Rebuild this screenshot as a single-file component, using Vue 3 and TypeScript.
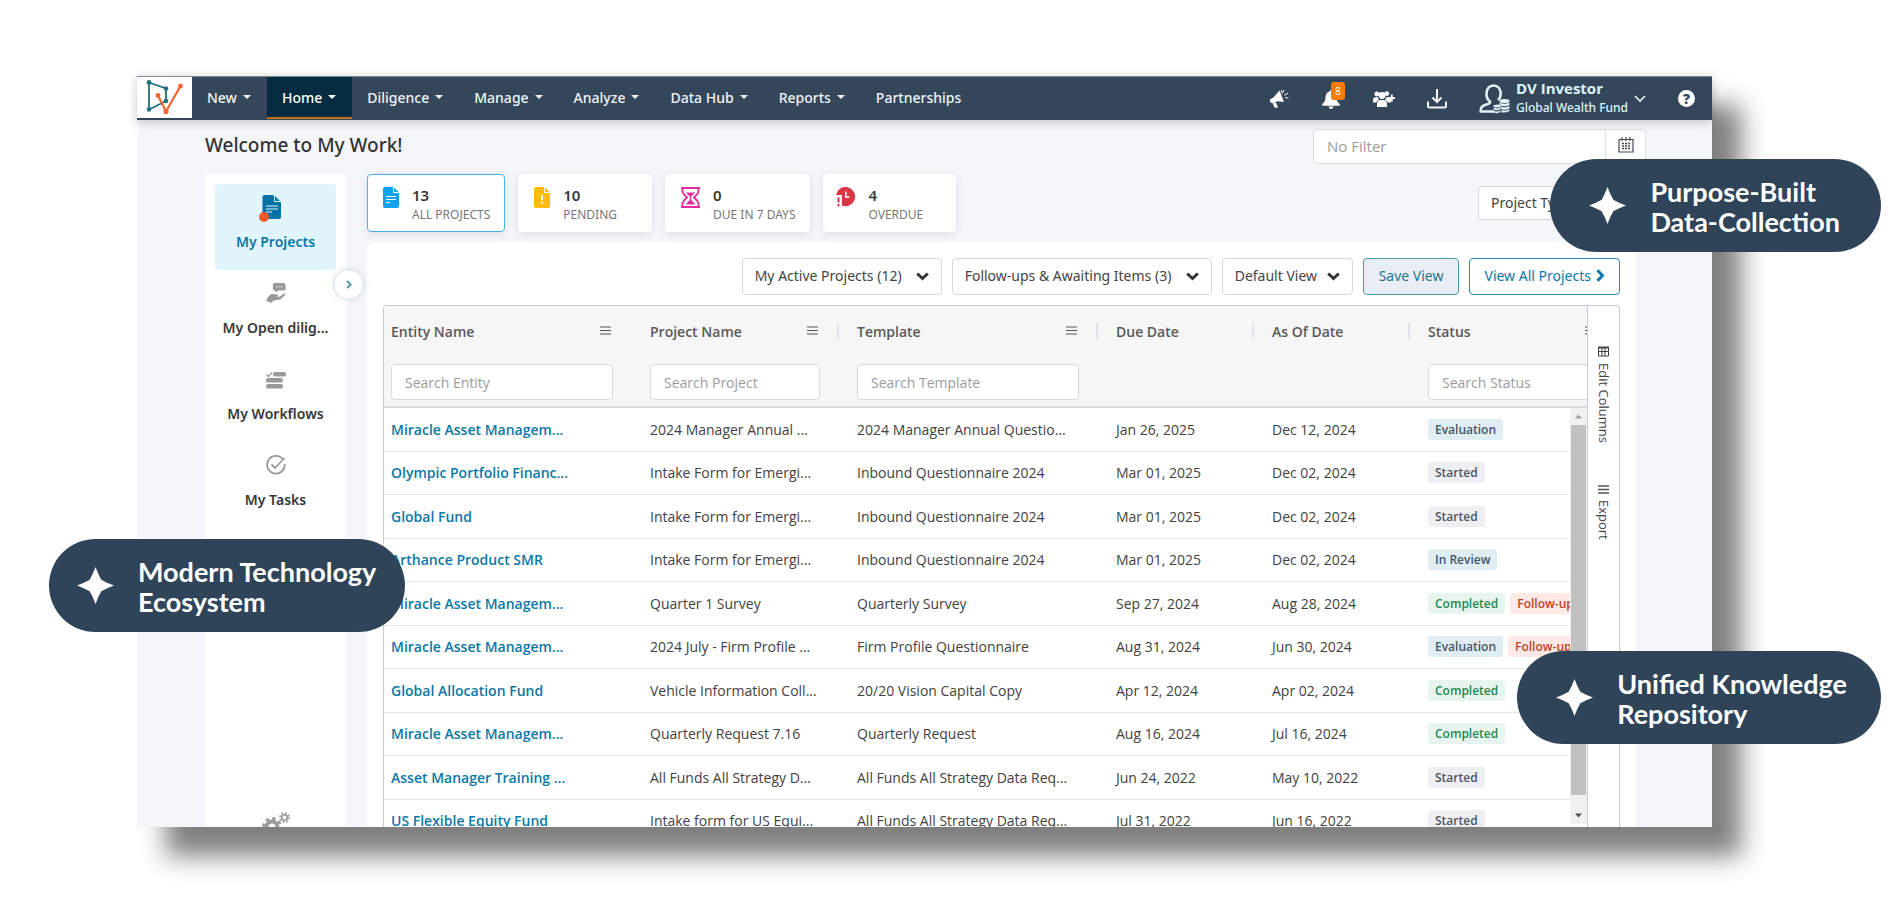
<script setup lang="ts">
interface NavItem { label: string; active?: boolean }
interface Tag { text: string; tone: 'blue' | 'grey' | 'green' | 'red' }
interface Row { entity: string; project: string; template: string; due: string; asOf: string; tags: Tag[] }
interface Column { key: string; title: string; search?: string; menu: boolean; divider: boolean }

const navItems: NavItem[] = [
  { label: 'New' },
  { label: 'Home', active: true },
  { label: 'Diligence' },
  { label: 'Manage' },
  { label: 'Analyze' },
  { label: 'Data Hub' },
  { label: 'Reports' },
]

const stats = [
  { icon: 'doc', value: 13, label: 'ALL PROJECTS', active: true },
  { icon: 'alert', value: 10, label: 'PENDING', active: false },
  { icon: 'hourglass', value: 0, label: 'DUE IN 7 DAYS', active: false },
  { icon: 'clock', value: 4, label: 'OVERDUE', active: false },
]

const sideItems = [
  { icon: 'projects', label: 'My Projects', active: true },
  { icon: 'diligence', label: 'My Open dilig...', active: false },
  { icon: 'workflows', label: 'My Workflows', active: false },
  { icon: 'tasks', label: 'My Tasks', active: false },
]

const filters = ['My Active Projects (12)', 'Follow-ups & Awaiting Items (3)', 'Default View']

const columns: Column[] = [
  { key: 'entity', title: 'Entity Name', search: 'Search Entity', menu: true, divider: false },
  { key: 'project', title: 'Project Name', search: 'Search Project', menu: true, divider: false },
  { key: 'template', title: 'Template', search: 'Search Template', menu: true, divider: true },
  { key: 'due', title: 'Due Date', menu: false, divider: true },
  { key: 'asof', title: 'As Of Date', menu: false, divider: true },
  { key: 'status', title: 'Status', search: 'Search Status', menu: true, divider: true },
]

const evaluation: Tag = { text: 'Evaluation', tone: 'blue' }
const review: Tag = { text: 'In Review', tone: 'blue' }
const started: Tag = { text: 'Started', tone: 'grey' }
const completed: Tag = { text: 'Completed', tone: 'green' }
const followUp: Tag = { text: 'Follow-up', tone: 'red' }

const rows: Row[] = [
  { entity: 'Miracle Asset Managem...', project: '2024 Manager Annual ...', template: '2024 Manager Annual Questio...', due: 'Jan 26, 2025', asOf: 'Dec 12, 2024', tags: [evaluation] },
  { entity: 'Olympic Portfolio Financ...', project: 'Intake Form for Emergi...', template: 'Inbound Questionnaire 2024', due: 'Mar 01, 2025', asOf: 'Dec 02, 2024', tags: [started] },
  { entity: 'Global Fund', project: 'Intake Form for Emergi...', template: 'Inbound Questionnaire 2024', due: 'Mar 01, 2025', asOf: 'Dec 02, 2024', tags: [started] },
  { entity: 'Arthance Product SMR', project: 'Intake Form for Emergi...', template: 'Inbound Questionnaire 2024', due: 'Mar 01, 2025', asOf: 'Dec 02, 2024', tags: [review] },
  { entity: 'Miracle Asset Managem...', project: 'Quarter 1 Survey', template: 'Quarterly Survey', due: 'Sep 27, 2024', asOf: 'Aug 28, 2024', tags: [completed, followUp] },
  { entity: 'Miracle Asset Managem...', project: '2024 July - Firm Profile ...', template: 'Firm Profile Questionnaire', due: 'Aug 31, 2024', asOf: 'Jun 30, 2024', tags: [evaluation, followUp] },
  { entity: 'Global Allocation Fund', project: 'Vehicle Information Coll...', template: '20/20 Vision Capital Copy', due: 'Apr 12, 2024', asOf: 'Apr 02, 2024', tags: [completed] },
  { entity: 'Miracle Asset Managem...', project: 'Quarterly Request 7.16', template: 'Quarterly Request', due: 'Aug 16, 2024', asOf: 'Jul 16, 2024', tags: [completed] },
  { entity: 'Asset Manager Training ...', project: 'All Funds All Strategy D...', template: 'All Funds All Strategy Data Req...', due: 'Jun 24, 2022', asOf: 'May 10, 2022', tags: [started] },
  { entity: 'US Flexible Equity Fund', project: 'Intake form for US Equi...', template: 'All Funds All Strategy Data Req...', due: 'Jul 31, 2022', asOf: 'Jun 16, 2022', tags: [started] },
]

const callouts = [
  { place: 'ecosystem', lines: ['Modern Technology', 'Ecosystem'] },
  { place: 'collection', lines: ['Purpose-Built', 'Data-Collection'] },
  { place: 'repository', lines: ['Unified Knowledge', 'Repository'] },
]
</script>

<template>
  <div class="stage">
    <div class="window">
      <header class="navbar">
        <a href="#" class="logo" aria-label="Home page">
          <svg width="55" height="41" viewBox="0 0 55 41" fill="none" stroke-width="2.2">
            <g stroke="#23707f" fill="#23707f">
              <path d="M12 5.500 29 11.500V24L12 32.500Z" fill="none" stroke-width="1.800" />
              <circle cx="12" cy="5.500" r="1.300" /><circle cx="29" cy="11.500" r="1.200" />
              <circle cx="29" cy="24" r="1.200" /><circle cx="12" cy="32.500" r="1.200" />
            </g>
            <g stroke="#f26430" fill="#f26430">
              <path d="M21 18.500 29 34.500 43.500 9" fill="none" />
              <circle cx="21" cy="18.500" r="1.300" /><circle cx="29" cy="34.500" r="1.500" /><circle cx="43.500" cy="9" r="1.300" />
            </g>
          </svg>
        </a>
        <nav class="menu">
          <button v-for="item in navItems" :key="item.label" type="button" class="menu-item" :class="{ current: item.active }">
            {{ item.label }}
            <svg width="8" height="4" viewBox="0 0 8 4"><path d="M0 0h8L4 4Z" fill="currentColor" /></svg>
          </button>
          <a href="#" class="menu-item">Partnerships</a>
        </nav>
        <div class="tools">
          <button type="button" class="tool" aria-label="Announcements">
            <svg width="20" height="20" viewBox="0 0 20 20" fill="#fff">
              <path d="M10.500 1.500 15 13 8.500 12.300 3.500 14.300Q0.500 14 .6 10.700L4.600 8.300Z" />
              <path d="M3.600 14.500 6.800 13.300 9 18.300 6 19Z" />
              <path d="M13.500 4.500 15 1M15.300 6.300 19 4.200M16 8.800 19.500 9M12.400 3.500 12.500 1" stroke="#fff" stroke-width="1" />
            </svg>
          </button>
          <button type="button" class="tool bell" aria-label="Notifications, 8 unread">
            <svg width="20" height="20" viewBox="0 0 20 20" fill="#fff">
              <path d="M10 1a1.400 1.400 0 0 1 1.400 1.500C14 3.200 15.500 5.400 15.500 8c0 4 1.300 5.400 3 6.800.9.800.5 2-.7 2H2.200c-1.200 0-1.600-1.200-.7-2C3.200 13.400 4.500 12 4.500 8c0-2.600 1.500-4.800 4.100-5.500A1.400 1.400 0 0 1 10 1ZM7.600 17.600h4.800a2.400 2.400 0 0 1-4.800 0Z" />
            </svg>
            <span class="badge">8</span>
          </button>
          <button type="button" class="tool" aria-label="Add people">
            <svg width="22" height="18" viewBox="0 0 22 18" fill="#fff">
              <circle cx="3.800" cy="4" r="2.400" /><circle cx="13.800" cy="3.600" r="2.400" /><circle cx="9" cy="5.500" r="3.400" />
              <path d="M0 12.500V10Q0 7.300 2.500 7.300H5Q5 9 6 9.800 3.800 10.500 3.300 12.500ZM4 17v-3Q4 10 7.500 10h3q3.500 0 3.500 4v3ZM14.800 12.500Q14.200 10.500 12 9.800 13 9 13 7.300h2.500q2.500 0 2.500 2.700v2.500Z" />
              <path d="M18.800 4.500v7M15.300 8h6.700" stroke="#fff" stroke-width="1.800" />
            </svg>
          </button>
          <button type="button" class="tool" aria-label="Downloads">
            <svg width="20" height="20" viewBox="0 0 20 20" fill="none" stroke="#f2f5f8" stroke-width="2">
              <path d="M10 0v13M5.500 8.500 10 13l4.500-4.500M1 12.500V17q0 1.500 1.500 1.500h15Q19 18.500 19 17V12.500" />
            </svg>
          </button>
          <button type="button" class="account">
            <svg width="31" height="30" viewBox="0 0 31 30" fill="none" stroke="#def3f6" stroke-width="2.600">
              <path d="M15 27.500H1.800Q1 22 7.500 20.500 11.500 19.500 11 17.500 7.500 15 7.500 10C7.500 4.500 10.500 1.500 14.500 1.500s7.200 3 7.200 8.500q0 3.500-2.700 6" />
              <g stroke="none" fill="#def3f6">
                <ellipse cx="25.500" cy="17" rx="5" ry="2" /><path d="M20.500 18.500q5 2.500 10 0V21q-5 2.500-10 0ZM20.500 22q5 2.500 10 0v2.500q-5 2.500-8 .5ZM22.500 26q4 1.500 8-.5V27q-3 2-8 1.500Z" />
                <ellipse cx="18" cy="22" rx="3.500" ry="1.500" /><path d="M14.500 23.500q3.500 1.800 7 0V25.500q-3.500 1.500-7 0ZM14.500 26.500q3.500 1.800 7 0V28q-3 2-7 .5Z" />
              </g>
            </svg>
            <span class="who"><b>DV Investor</b><span>Global Wealth Fund</span></span>
            <svg class="down" width="12" height="8" viewBox="0 0 12 8" fill="none" stroke="#e6f3f6" stroke-width="1.600"><path d="M1 1l5 5 5-5" /></svg>
          </button>
          <button type="button" class="tool help" aria-label="Help">?</button>
        </div>
      </header>

      <main class="page">
        <div class="heading">
          <h1>Welcome to My Work!</h1>
          <div class="date-filter">
            <input type="text" placeholder="No Filter" aria-label="Date filter" />
            <button type="button" aria-label="Open calendar">
              <svg width="16" height="16" viewBox="0 0 16 16" fill="none" stroke="#4c4656" stroke-width="1.200">
                <path d="M1 2.500h14v12.500H1ZM4 0v4M8 0v4M12 0v4" />
                <path d="M4 6.500h2M7 6.500h2M10 6.500h2M4 9h2M7 9h2M10 9h2M4 11.500h2M7 11.500h2M10 11.500h2" stroke-width="1.600" />
              </svg>
            </button>
          </div>
        </div>

        <div class="body">
          <aside class="sidebar">
            <a v-for="item in sideItems" :key="item.icon" href="#" class="side-item" :class="{ current: item.active }">
              <svg v-if="item.icon === 'projects'" width="33" height="28" viewBox="0 0 33 28">
                <path d="M5.500 0H14l8 7.500V22q0 2-2 2H5.500q-2 0-2-2V2q0-2 2-2Z" fill="#0672a8" />
                <path d="M15.500 0v6.500H22Z" fill="#0672a8" stroke="#e1f5fe" stroke-width="1" />
                <path d="M7 11h12M7 14h12M7 17h6" stroke="#e1f5fe" stroke-width="1.200" />
                <circle cx="5" cy="22" r="5" fill="#f15a2b" />
              </svg>
              <svg v-else-if="item.icon === 'diligence'" width="20" height="20" viewBox="0 0 20 20" fill="#9a9a9a">
                <path d="M8.500 0H18q1.500 0 1.500 1.500V6q0 1.500-1.500 1.500H12L9.500 10V7.500H8.500Q7 7.500 7 6V1.500Q7 0 8.500 0Z" />
                <path d="M10 3.800h6" stroke="#fff" stroke-width="1" stroke-dasharray="1.200 1.200" />
                <path d="M1.500 15Q4 10.500 7 11l4 .5q2 .8 0 2H8.500l5 .3L18 10.500q2 0 1.200 1.500L14.500 16.500 7.500 17.500 5 20 0 17.500Z" />
              </svg>
              <svg v-else-if="item.icon === 'workflows'" width="20" height="20" viewBox="0 -3 20 20" fill="#9a9a9a">
                <rect x="7" y="0" width="13" height="4.600" rx="2.200" /><rect x="0" y="6" width="17" height="4.600" rx="2.200" /><rect x="0" y="12" width="17" height="4.600" rx="2.200" />
                <path d="M.5 2.500 2.500 4.500 6 .5" fill="none" stroke="#9a9a9a" stroke-width="1.200" />
              </svg>
              <svg v-else width="20" height="20" viewBox="0 0 20 20" fill="none" stroke="#9a9a9a" stroke-width="1.800">
                <path d="M17 4.500A8.800 8.800 0 1 0 18.700 9" /><path d="M5.500 9.500 9 13 18.500 3" />
              </svg>
              <span>{{ item.label }}</span>
            </a>
            <button type="button" class="settings" aria-label="Settings">
              <svg width="28" height="26" viewBox="0 0 28 26" fill="none" stroke="#9a9a9a">
                <circle cx="10" cy="15" r="5.500" stroke-width="4" /><circle cx="10" cy="15" r="8.500" stroke-width="3" stroke-dasharray="3.340 3.340" />
                <circle cx="22.500" cy="5.500" r="2.800" stroke-width="1.600" /><circle cx="22.500" cy="5.500" r="4.500" stroke-width="1.800" stroke-dasharray="1.767 1.767" />
              </svg>
            </button>
            <button type="button" class="expand" aria-label="Expand sidebar">
              <svg width="6" height="9" viewBox="0 0 6 9" fill="none" stroke="#45939f" stroke-width="1.800"><path d="M1 .8l3.700 3.700L1 8.200" /></svg>
            </button>
          </aside>

          <section class="content">
            <div class="stats">
              <button v-for="s in stats" :key="s.label" type="button" class="stat" :class="{ current: s.active }">
                <svg v-if="s.icon === 'doc'" width="16" height="21" viewBox="0 0 16 21">
                  <path d="M2 0H10.500L16 5.500V19q0 2-2 2H2q-2 0-2-2V2Q0 0 2 0Z" fill="#0ea2f1" />
                  <path d="M10.500 0v5.500H16" stroke="#fff" fill="none" /><path d="M3 9.500h10M3 12.500h10M3 15.500h4" stroke="#fff" stroke-width="1.200" />
                </svg>
                <svg v-else-if="s.icon === 'alert'" width="16" height="21" viewBox="0 0 16 21">
                  <path d="M2 0H10.500L16 5.500V19q0 2-2 2H2q-2 0-2-2V2Q0 0 2 0Z" fill="#fdbc0b" />
                  <path d="M10.500 0v5.500H16" stroke="#fff" fill="none" /><path d="M8 8v5M8 14.500V16.500" stroke="#fff" stroke-width="1.800" />
                </svg>
                <svg v-else-if="s.icon === 'hourglass'" width="19" height="21" viewBox="0 0 19 21" fill="none" stroke="#e32b9f" stroke-width="1.800">
                  <path d="M0 1h19M0 20h19M1.500 1v3Q1.500 6.500 6 10.500 1.500 14.500 1.500 17v3M17.500 1v3Q17.500 6.500 13 10.500 17.500 14.500 17.500 17v3" />
                  <path d="M5 5.500H14L10.200 9.500V13L14.500 17.500H4.500L8.800 13V9.500Z" fill="#e32b9f" stroke="none" />
                </svg>
                <svg v-else width="19" height="20" viewBox="0 0 19 20">
                  <path d="M0 8A9.600 9.600 0 1 1 6 18.500V8Z" fill="#dc3545" />
                  <path d="M9.800 4.500V10H13.500" stroke="#fff" stroke-width="1.600" fill="none" />
                  <path d="M2.500 10.500v5M2.500 17v2.500" stroke="#dc3545" stroke-width="2" />
                </svg>
                <span class="stat-text"><b>{{ s.value }}</b><span>{{ s.label }}</span></span>
              </button>
              <span class="select type-select">
                <select aria-label="Project type"><option>Project Type</option></select>
                <svg width="13" height="9" viewBox="0 0 13 9" fill="none" stroke="#333" stroke-width="3"><path d="M1.200 1.500l5.300 5 5.300-5" /></svg>
              </span>
            </div>

            <div class="panel">
              <div class="toolbar">
                <span v-for="f in filters" :key="f" class="select">
                  <select :aria-label="f"><option>{{ f }}</option></select>
                  <svg width="13" height="9" viewBox="0 0 13 9" fill="none" stroke="#333" stroke-width="3"><path d="M1.200 1.500l5.300 5 5.300-5" /></svg>
                </span>
                <button type="button" class="btn soft">Save View</button>
                <a href="#" class="btn">View All Projects
                  <svg width="9" height="13" viewBox="0 0 9 13" fill="none" stroke="#0b78ab" stroke-width="3"><path d="M1.500 1.200l5 5.300-5 5.300" /></svg>
                </a>
              </div>

              <div class="grid">
                <div class="scroller">
                  <table>
                    <colgroup><col v-for="c in columns" :key="c.key" :class="'c-' + c.key" /></colgroup>
                    <thead>
                      <tr>
                        <th v-for="c in columns" :key="c.key" scope="col" :class="{ divider: c.divider }">
                          <div class="th-title">
                            <span>{{ c.title }}</span>
                            <svg v-if="c.menu" width="11" height="9" viewBox="0 0 11 9" stroke="#555" stroke-width="1.200"><path d="M0 1h11M0 4.500h11M0 8h11" /></svg>
                          </div>
                          <input v-if="c.search" type="text" :placeholder="c.search" :aria-label="c.search" />
                        </th>
                      </tr>
                    </thead>
                    <tbody>
                      <tr v-for="(r, i) in rows" :key="i">
                        <td><a href="#">{{ r.entity }}</a></td>
                        <td>{{ r.project }}</td>
                        <td>{{ r.template }}</td>
                        <td>{{ r.due }}</td>
                        <td>{{ r.asOf }}</td>
                        <td><div class="tags"><span v-for="t in r.tags" :key="t.text" class="tag" :class="t.tone">{{ t.text }}</span></div></td>
                      </tr>
                    </tbody>
                  </table>
                  <div class="scrollbar" aria-hidden="true">
                    <svg width="17" height="17" viewBox="0 0 17 17"><path d="M5 10.500h7L8.500 6.500Z" fill="#a0a0a0" /></svg>
                    <div class="thumb"></div>
                    <svg width="17" height="17" viewBox="0 0 17 17"><path d="M5 6.500h7L8.500 10.500Z" fill="#505050" /></svg>
                  </div>
                </div>
                <div class="side-tools">
                  <button type="button">
                    <svg width="11" height="11" viewBox="0 0 11 11" fill="none" stroke="#444"><path d="M.5 1.500h10v8.500H.5ZM4 1v9M7 1v9M.5 5.500h10" /><path d="M0 1.500h11" stroke-width="2" /></svg>
                    Edit Columns
                  </button>
                  <button type="button">
                    <svg width="11" height="9" viewBox="0 0 11 9" stroke="#555" stroke-width="1.400"><path d="M0 1h11M0 4.500h11M0 8h11" /></svg>
                    Export
                  </button>
                </div>
              </div>
            </div>
          </section>
        </div>
      </main>
    </div>

    <div v-for="c in callouts" :key="c.place" class="callout" :class="c.place">
      <svg width="37" height="37" viewBox="0 0 37 37" fill="#fff"><path d="M18.500 0Q21.500 8 24.300 12.700 29 15.500 37 18.500 29 21.500 24.300 24.300 21.500 29 18.500 37 15.500 29 12.700 24.300 8 21.500 0 18.500 8 15.500 12.700 12.700 15.500 8 18.500 0Z" /></svg>
      <p><span v-for="l in c.lines" :key="l">{{ l }}</span></p>
    </div>
  </div>
</template>

<style>
body { background: #fff; }
</style>

<style scoped>
* { box-sizing: border-box; }
.stage {
  position: relative;
  height: 100vh;
  padding: 76px 186px 79px 137px;
  overflow: hidden;
  font-family: "Open Sans", "Noto Sans", sans-serif;
  font-size: 14px;
  color: #444;
}
button, input, select { font: inherit; color: inherit; margin: 0; }
button { border: 0; padding: 0; background: none; }
a { color: inherit; text-decoration: none; }
svg { flex: none; display: block; }

.window {
  display: flex;
  flex-direction: column;
  height: 100%;
  background: #f5f6fa;
  box-shadow: 29px 29px 24px rgba(0, 0, 0, .5);
}

/* navigation */
.navbar {
  position: relative;
  display: flex;
  flex: none;
  height: 44px;
  background: #34475a;
  border-top: 1px solid #7e8b95;
  box-shadow: 0 2px 10px rgba(0, 0, 0, .22);
  color: #f0f3f6;
}
.logo { height: 41px; background: #fff; }
.menu { display: flex; height: 42px; font-family: "Noto Sans", sans-serif; font-size: 14px; font-weight: 500; }
.menu-item {
  display: flex;
  align-items: center;
  gap: 6px;
  padding: 0 16px 0 15px;
  border-bottom: 2px solid transparent;
  white-space: nowrap;
}
.menu-item.current { background: #042b40; border-color: #c4711c; color: #fff; }
.tools { display: flex; align-items: center; margin-left: auto; padding-right: 17px; }
.tool { position: relative; margin-right: 32px; }
.badge {
  position: absolute;
  left: 10px;
  top: -7px;
  width: 14px;
  line-height: 18px;
  border-radius: 3px;
  background: #f57c00;
  color: #fff;
  font-size: 10px;
  text-align: center;
}
.account { display: flex; align-items: center; gap: 6px; margin-right: 32px; color: #def3f6; text-align: left; }
.who { display: flex; flex-direction: column; line-height: 20px; white-space: nowrap; font-family: "Noto Sans", sans-serif; font-size: 12px; font-weight: 500; }
.who b { margin-top: -2px; font-family: "Open Sans", sans-serif; font-size: 15px; }
.help {
  width: 17px;
  height: 17px;
  margin-right: 0;
  border-radius: 50%;
  background: #fff;
  color: #34475a;
  font-size: 14px;
  font-weight: 800;
  line-height: 17px;
}

/* page */
.page {
  display: flex;
  flex: 1;
  flex-direction: column;
  min-height: 0;
  padding: 9px 66px 0 68px;
  overflow: hidden;
}
.heading { display: flex; flex: none; height: 45px; justify-content: space-between; }
h1 { margin: 0; font-family: "Noto Sans", sans-serif; font-size: 19px; line-height: 33px; font-weight: 500; color: #333; }
.date-filter {
  display: flex;
  width: 333px;
  height: 35px;
  border: 1px solid #dcdee0;
  border-radius: 4px;
  background: #fff;
}
.date-filter input { flex: 1; min-width: 0; padding: 0 13px 2px; border: 0; background: none; font-size: 15px; }
.date-filter button { display: grid; width: 40px; border-left: 1px solid #dcdee0; place-items: center; padding-bottom: 4px; }
input::placeholder { color: #9c9c9c; opacity: 1; }

.body { display: flex; flex: 1; gap: 21px; min-height: 0; padding-right: 10px; }
.sidebar {
  position: relative;
  display: flex;
  flex: none;
  flex-direction: column;
  width: 141px;
  height: 674px;
  padding: 10px;
  border-radius: 4px;
  background: #fff;
}
.side-item {
  display: flex;
  flex-direction: column;
  align-items: center;
  height: 86px;
  padding-top: 13px;
  border-radius: 4px;
  color: #383838;
  font-family: "Noto Sans", sans-serif;
  font-size: 14px;
  line-height: 20px;
  font-weight: 600;
}
.side-item svg { margin-bottom: auto; }
.side-item span { margin-bottom: 18px; }
.side-item.current { padding-top: 11px; background: #e1f5fe; color: #0878a8; }
.settings { align-self: center; margin-top: auto; }
.expand {
  position: absolute;
  top: 95px;
  right: -18px;
  display: grid;
  width: 31px;
  height: 31px;
  place-items: center;
  border: 1px solid #cfe3ea;
  border-radius: 50%;
  background: #fff;
  box-shadow: 0 0 8px rgba(0, 0, 0, .08);
}

.content { display: flex; flex: 1; flex-direction: column; min-width: 0; }
.stats { display: flex; flex: none; gap: 13px; height: 68px; }
.stat {
  display: flex;
  gap: 13px;
  height: 58px;
  padding: 12px 14px 0 15px;
  border: 1px solid #fff;
  border-radius: 4px;
  background: #fff;
  box-shadow: 0 2px 9px rgba(0, 0, 0, .1);
  text-align: left;
}
.stat:nth-child(2) { padding-right: 34px; }
.stat:nth-child(4) { padding: 12px 32px 0 12px; }
.stat.current { border-color: #45b2e8; }
.stat-text { display: flex; flex-direction: column; font-family: "Noto Sans", sans-serif; font-size: 12px; line-height: 20px; color: #777; white-space: nowrap; }
.stat-text b { font-size: 15px; line-height: 19px; margin-top: -1px; font-weight: 600; color: #383838; }
.select { position: relative; display: flex; }
.select select {
  height: 37px;
  padding: 0 39px 2px 12px;
  border: 1px solid #d5d7d9;
  border-radius: 4px;
  background: #fff;
  appearance: none;
  font-family: "Noto Sans", sans-serif;
  font-size: 14px;
}
.select svg { position: absolute; right: 13px; top: 14px; pointer-events: none; }
.toolbar .select:nth-child(3) select { padding-right: 34px; }
.type-select { width: 158px; margin: 12px 0 0 auto; }
.type-select select { flex: 1; height: 34px; }

.panel {
  display: flex;
  flex: 1;
  flex-direction: column;
  min-height: 0;
  padding: 16px 16px 0;
  border-radius: 6px 6px 0 0;
  background: #fff;
}
.toolbar { display: flex; flex: none; justify-content: flex-end; gap: 10px; margin-bottom: 10px; }
.btn {
  display: flex;
  align-items: center;
  gap: 5px;
  height: 37px;
  padding: 0 14px 2px;
  border: 1px solid #2689b3;
  border-radius: 4px;
  color: #0b78ab;
  font-family: "Noto Sans", sans-serif;
  font-size: 14px;
  white-space: nowrap;
}
.btn.soft { padding: 0 15px 2px; background: #e9eef6; border-color: #4d98aa; color: #26758d; }

.grid {
  display: flex;
  flex: 1;
  min-height: 0;
  border: 1px solid #c9cbd4;
  border-bottom: 0;
  border-radius: 4px 4px 0 0;
}
.scroller { position: relative; flex: 1; min-width: 0; overflow: hidden; }
table { width: 100%; min-width: 1244px; table-layout: fixed; border-collapse: collapse; }
.c-entity, .c-template { width: 259px; }
.c-project, .c-status { width: 207px; }
.c-due, .c-asof { width: 156px; }
th {
  position: relative;
  height: 101px;
  padding: 16px 30px 4px 7px;
  border-bottom: 2px solid #d6dade;
  background: #f6f6f6;
  color: #595959;
  font-weight: 600;
  text-align: left;
  vertical-align: top;
}
.th-title { display: flex; justify-content: space-between; height: 42px; padding-right: 2px; line-height: 20px; }
.th-title svg { margin-top: 4px; }
th.divider::before { content: ""; position: absolute; left: -13px; top: 17px; width: 2px; height: 16px; background: #e0e3ea; }
th input {
  width: 100%;
  height: 36px;
  padding: 0 13px;
  border: 1px solid #d8dadc;
  border-radius: 4px;
  background: #fff;
  font-weight: 400;
}
td {
  height: 44px;
  padding: 0 0 0 7px;
  border-bottom: 1px solid #e8e9ef;
  color: #424242;
  font-weight: 500;
  white-space: nowrap;
}
tr:nth-child(even) td { height: 43px; }
td a { color: #0b78a6; font-weight: 600; }
.tags { display: flex; gap: 5px; }
.tag { padding: 0 7px; border-radius: 3px; font-size: 12px; line-height: 21px; font-weight: 600; }
.blue { background: #e0edf3; color: #43566a; }
.grey { background: #eeeff3; color: #51555d; }
.green { background: #e8f5ee; color: #1c8a57; }
.red { background: #ffe9e7; color: #bb4521; }
.scrollbar {
  position: absolute;
  top: 102px;
  right: 0;
  bottom: 3px;
  display: flex;
  flex-direction: column;
  width: 17px;
  background: #f1f1f1;
}
.thumb { flex: 1; margin: 0 1px 12px; background: #c1c1c1; }

.side-tools {
  display: flex;
  flex: none;
  flex-direction: column;
  gap: 42px;
  width: 32px;
  padding-top: 40px;
  border-left: 1px solid #c9cbd4;
}
.side-tools button { display: flex; align-items: center; gap: 6px; writing-mode: vertical-rl; font-size: 13px; line-height: 31px; }

/* callouts floating over the window */
.callout {
  position: absolute;
  display: flex;
  align-items: center;
  gap: 24px;
  height: 93px;
  padding: 0 29px 0 28px;
  border-radius: 47px;
  background: #2f4458;
  color: #fff;
  font-family: Lato, sans-serif;
  font-size: 27px;
  font-weight: 700;
  line-height: 30px;
  white-space: nowrap;
}
.callout p { margin: 3px 0 0; }
.callout span { display: block; }
.ecosystem { left: 49px; top: 539px; }
.collection { right: 17px; top: 159px; padding: 0 41px 0 39px; }
.repository { right: 17px; top: 651px; padding: 0 34px 0 39px; }
</style>
